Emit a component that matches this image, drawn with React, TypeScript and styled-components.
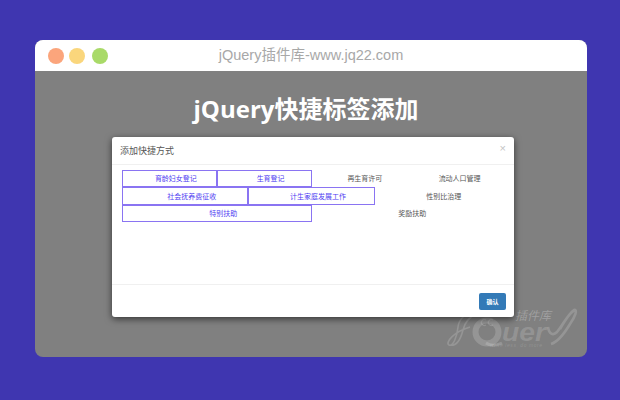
import React from "react";
import styled, { createGlobalStyle } from "styled-components";

const Global = createGlobalStyle`
  html, body { margin: 0; padding: 0; background: #3f36b0; }
  body { font-family: "Liberation Sans", "Noto Sans CJK SC", sans-serif; }
`;
const Page = styled.div`
  width: 620px; height: 400px; box-sizing: border-box; padding: 40px 33px 43px 35px; overflow: hidden;
`;
const Win = styled.div`
  position: relative; width: 552px; height: 317px; border-radius: 8px; overflow: hidden;
  background: #808080; display: flex; flex-direction: column;
`;
const TopBar = styled.div`
  height: 31px; background: #fff; position: relative; display: flex; align-items: center; justify-content: center;
  box-sizing: border-box; flex: none;
`;
const Dots = styled.div`
  position: absolute; left: 13px; top: 8px; display: flex; gap: 5px;
`;
const Dot = styled.span<{ $c: string; $shift?: number }>`
  width: 16px; height: 16px; border-radius: 50%; background: ${p => p.$c}; margin-left: ${p => p.$shift ?? 0}px;
`;
const Site = styled.div`
  font-size: 14.5px; color: #a8a8a8; line-height: 31px; white-space: nowrap; margin-top: -1px;
`;
const Title = styled.h1`
  margin: 23px 0 0; font: 700 24px/30px "Open Sans", "Noto Sans CJK SC", sans-serif; color: #fff; text-align: center;
  padding-right: 10px; height: 30px; white-space: nowrap;
`;
const Modal = styled.div`
  margin: 13px 0 0 77px; width: 402px; height: 180px; background: #fff; border-radius: 3px;
  box-shadow: 0 2px 7px rgba(0,0,0,.6); display: flex; flex-direction: column; position: relative; z-index: 1;
`;
const MHead = styled.div`
  height: 28px; box-sizing: border-box; flex: none; border-bottom: 1px solid #f0f0f0; display: flex; align-items: center; justify-content: space-between;
  padding: 0 8px; font-size: 9px; color: #555;
`;
const Close = styled.span`
  font-size: 11px; color: #c4c4c4; line-height: 1; margin-top: -4px;
`;
const MBody = styled.div`
  flex: 1; padding: 5px 13px 0 10px; font-size: 7px;
`;
const TagRow = styled.div`
  display: flex; height: 17.4px;
`;
const Tag = styled.div<{ $on?: boolean }>`
  flex: 1 1 0; min-width: 0; box-sizing: border-box; display: flex; align-items: center; justify-content: center;
  padding-bottom: 1px;
  border: 1px solid ${p => p.$on ? "#8a74f2" : "transparent"}; color: ${p => p.$on ? "#4f3df2" : "#555"}; white-space: nowrap;
`;
const TagLabel = styled.span<{ $on?: boolean }>`
  padding-left: ${p => p.$on ? 13 : 12}px;
`;
const MFoot = styled.div`
  height: 33px; box-sizing: border-box; flex: none; border-top: 1px solid #f0f0f0; display: flex; align-items: center; justify-content: flex-end; padding: 0 8px;
`;
const Btn = styled.button`
  width: 27px; height: 17px; border: 0; border-radius: 2px; background: #337ab7; color: #fff; font: 700 6px "Noto Sans CJK SC", sans-serif; padding: 0;
`;
const Mark = styled.svg`
  position: absolute; left: 405px; top: 260px; width: 145px; height: 55px; pointer-events: none;
`;

const rows: [string, boolean][][] = [
  [["育龄妇女登记", true], ["生育登记", true], ["再生育许可", false], ["流动人口管理", false]],
  [["社会抚养费征收", true], ["计生家庭发展工作", true], ["性别比治理", false]],
  [["特别扶助", true], ["奖励扶助", false]],
];

const ink = "rgba(255,255,255,.17)";

export default function App() {
  return (
    <Page>
      <Global />
      <Win>
        <TopBar>
          <Dots>
            <Dot $c="#fba57c" />
            <Dot $c="#fad67c" />
            <Dot $c="#a9da68" $shift={2} />
          </Dots>
          <Site>jQuery插件库-www.jq22.com</Site>
        </TopBar>
        <Title>jQuery快捷标签添加</Title>
        <Modal>
          <MHead>
            <span>添加快捷方式</span>
            <Close>×</Close>
          </MHead>
          <MBody>
            {rows.map((r, i) => (
              <TagRow key={i}>
                {r.map(([t, on]) => (
                  <Tag key={t} $on={on}><TagLabel $on={on}>{t}</TagLabel></Tag>
                ))}
              </TagRow>
            ))}
          </MBody>
          <MFoot><Btn>确认</Btn></MFoot>
        </Modal>
        <Mark viewBox="0 0 145 55" aria-label="jQuery插件库">
          <path d="M36 15 C26 11 19 19 18 27 C17 37 13 47 9 45 C5 43 13 32 30 27 M36 15 C30 16 25 22 23 30 C21 38 17 47 9 45" fill="none" stroke={ink} strokeWidth="1.6" />
          <circle cx="47" cy="32" r="11.5" fill="none" stroke={ink} strokeWidth="6" />
          <path d="M46 43 C52 47 58 45 62 43" fill="none" stroke={ink} strokeWidth="3" />
          <path d="M46 20 a3 3 0 1 0 0 5 M53 20 a3 3 0 1 0 0 5" fill="none" stroke={ink} strokeWidth="1.2" />
          <text x="62" y="41" fill={ink} fontFamily="'Liberation Sans', sans-serif" fontWeight="700" fontStyle="italic" fontSize="25" textLength="44" lengthAdjust="spacingAndGlyphs">uer</text>
          <text x="75" y="20" fill="rgba(255,255,255,.26)" fontFamily="'Noto Sans CJK SC', sans-serif" fontStyle="italic" fontSize="12">插件库</text>
          <path d="M108 27 C109 34 113 36 117 32 C123 25 128 14 134 10 C138 9 135 17 130 24 C124 34 118 42 111 44 M120 29 C124 22 130 12 135 10" fill="none" stroke={ink} strokeWidth="2.6" />
          <text x="50" y="47" fill={ink} fontFamily="'Liberation Sans', sans-serif" fontStyle="italic" fontSize="5" textLength="52">write less, do more</text>
        </Mark>
      </Win>
    </Page>
  );
}
